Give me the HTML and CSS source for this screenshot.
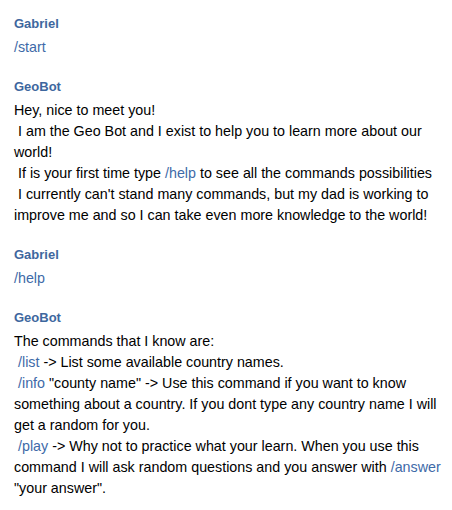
FILE: index.html
```html
<!DOCTYPE html>
<html>
<head>
<meta charset="utf-8">
<link rel="stylesheet" href="styles.css">
</head>
<body>
<div class="chat">
  <div class="msg">
    <div class="name">Gabriel</div>
    <div class="text"><a class="cmd">/start</a></div>
  </div>
  <div class="msg">
    <div class="name">GeoBot</div>
    <div class="text">Hey, nice to meet you!
 I am the Geo Bot and I exist to help you to learn more about our world!
 If is your first time type <a class="cmd">/help</a> to see all the commands possibilities
 I currently can't stand many commands, but my dad is working to improve me and so I can take even more knowledge to the world!</div>
  </div>
  <div class="msg">
    <div class="name">Gabriel</div>
    <div class="text"><a class="cmd">/help</a></div>
  </div>
  <div class="msg">
    <div class="name">GeoBot</div>
    <div class="text">The commands that I know are:
 <a class="cmd">/list</a> -&gt; List some available country names.
 <a class="cmd">/info</a> "county name" -&gt; Use this command if you want to know something about a country. If you dont type any country name I will get a random for you.
 <a class="cmd">/play</a> -&gt; Why not to practice what your learn. When you use this command I will ask random questions and you answer with <a class="cmd">/answer</a> "your answer".</div>
  </div>
</div>
</body>
</html>
```

FILE: styles.css
```css
html, body {
  margin: 0;
  padding: 0;
  background: #ffffff;
}
.chat {
  padding: 15px 8px 0 14px;
  display: flex;
  flex-direction: column;
  gap: 20px;
  font-family: "Liberation Sans", Arial, sans-serif;
}
.msg {
  display: flex;
  flex-direction: column;
  gap: 4px;
}
.name {
  font-size: 13px;
  font-weight: bold;
  line-height: 18px;
  color: #3e679e;
}
.text {
  font-size: 14.3px;
  line-height: 21px;
  color: #000000;
  white-space: pre-wrap;
}
.cmd {
  color: #3e6aa8;
  text-decoration: none;
}
```
